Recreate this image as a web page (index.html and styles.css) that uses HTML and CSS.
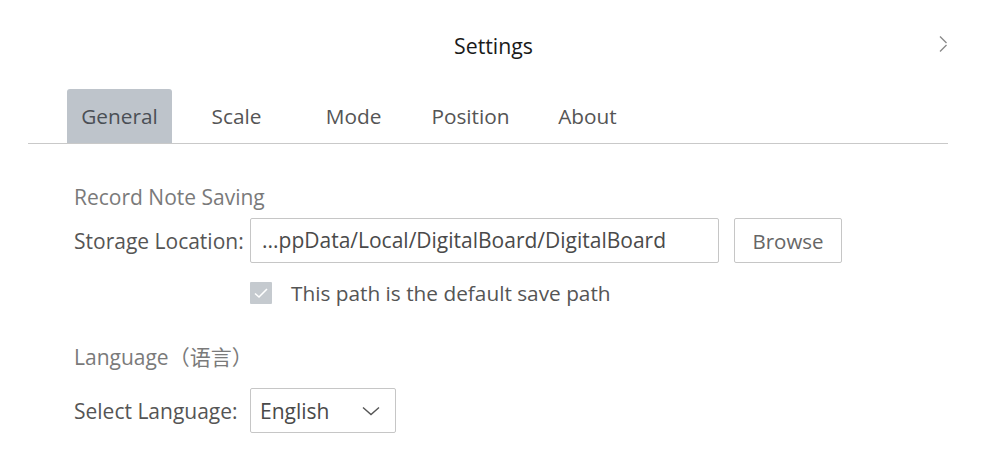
FILE: index.html
```html
<!DOCTYPE html>
<html>
<head>
<meta charset="utf-8">
<link rel="stylesheet" href="styles.css">
</head>
<body>
<div class="dialog">
  <header class="titlebar">
    <div class="title">Settings</div>
    <svg class="close" width="9" height="18" viewBox="0 0 9 18"><path d="M1 1.5 L7.5 8 M1 16.5 L7.5 10" stroke="#8a8a8a" stroke-width="1.4" fill="none"/></svg>
  </header>
  <nav class="tabs">
    <div class="tab active">General</div>
    <div class="tab">Scale</div>
    <div class="tab">Mode</div>
    <div class="tab">Position</div>
    <div class="tab">About</div>
  </nav>
  <section class="content">
    <div class="heading first">Record Note Saving</div>
    <div class="row first">
      <span class="label">Storage Location:</span>
      <div class="input">...ppData/Local/DigitalBoard/DigitalBoard</div>
      <button class="btn">Browse</button>
    </div>
    <div class="checkrow">
      <span class="checkbox"><svg width="22" height="22" viewBox="0 0 22 22"><path d="M5 11.5 L9 15 L17 7" stroke="#fff" stroke-width="1.6" fill="none"/></svg></span>
      <span class="checktext">This path is the default save path</span>
    </div>
    <div class="heading lang">Language（语言）</div>
    <div class="row second">
      <span class="label">Select Language:</span>
      <div class="select"><span>English</span><svg width="18" height="10" viewBox="0 0 18 10"><path d="M1 1.5 L9 8.5 L17 1.5" stroke="#555" stroke-width="1.4" fill="none"/></svg></div>
    </div>
  </section>
</div>
</body>
</html>
```
FILE: styles.css
```css
html, body { margin: 0; padding: 0; background: #fff; }
body {
  font-family: "Open Sans", "Noto Sans", "Noto Sans CJK SC", sans-serif;
  color: #555;
  width: 1000px;
  height: 449px;
  overflow: hidden;
}
.dialog {
  width: 920px;
  margin-left: 28px;
  overflow: hidden;
}
.titlebar {
  height: 89px;
  display: flex;
  justify-content: center;
  position: relative;
}
.title {
  margin-top: 31px;
  font-size: 21.3px;
  line-height: 30px;
  color: #1a1a1a;
  margin-left: 11px;
}
.close {
  position: absolute;
  right: 0;
  top: 35px;
}
.tabs {
  display: flex;
  gap: 12px;
  padding-left: 39px;
  height: 54px;
  border-bottom: 1.5px solid #c9c9c9;
}
.tab {
  width: 105px;
  text-align: center;
  font-size: 20.8px;
  line-height: 54px;
  color: #555;
  border-radius: 3px 3px 0 0;
}
.tab.active { background: #bec4cb; color: #4a4f55; }
.content { padding-left: 46px; }
.heading {
  font-size: 21px;
  color: #7a7a7a;
  line-height: 26px;
}
.heading.first { margin-top: 40px; }
.row {
  display: flex;
  align-items: center;
}
.row.first { margin-top: 8px; }
.row.second { margin-top: 18px; }
.label {
  width: 176px;
  font-size: 21px;
  line-height: 26px;
  color: #555;
  white-space: nowrap;
}
.input {
  width: 456px;
  height: 43px;
  border: 1px solid #c6c6c6;
  border-radius: 2px;
  font-size: 21px;
  line-height: 43px;
  padding-left: 11px;
  color: #4a4a4a;
  white-space: nowrap;
  overflow: hidden;
}
.btn {
  margin-left: 15px;
  width: 108px;
  height: 45px;
  border: 1px solid #c6c6c6;
  border-radius: 2px;
  background: #fff;
  font-family: inherit;
  font-size: 20.5px;
  color: #666;
  padding: 0;
}
.checkrow {
  display: flex;
  align-items: center;
  margin-left: 176px;
  margin-top: 19px;
  height: 22px;
}
.checkbox {
  width: 22px;
  height: 22px;
  background: #c5cacf;
  border-radius: 1px;
  display: block;
}
.checkbox svg { display: block; }
.checktext {
  margin-left: 19px;
  font-size: 20.8px;
  line-height: 22px;
  color: #555;
  white-space: nowrap;
}
.heading.lang { margin-top: 40px; }
.select {
  height: 43px;
  border: 1px solid #c6c6c6;
  border-radius: 2px;
  display: flex;
  align-items: center;
  justify-content: space-between;
  padding: 0 15px 0 9px;
  width: 120px;
  font-size: 21px;
  color: #4a4a4a;
}
```
